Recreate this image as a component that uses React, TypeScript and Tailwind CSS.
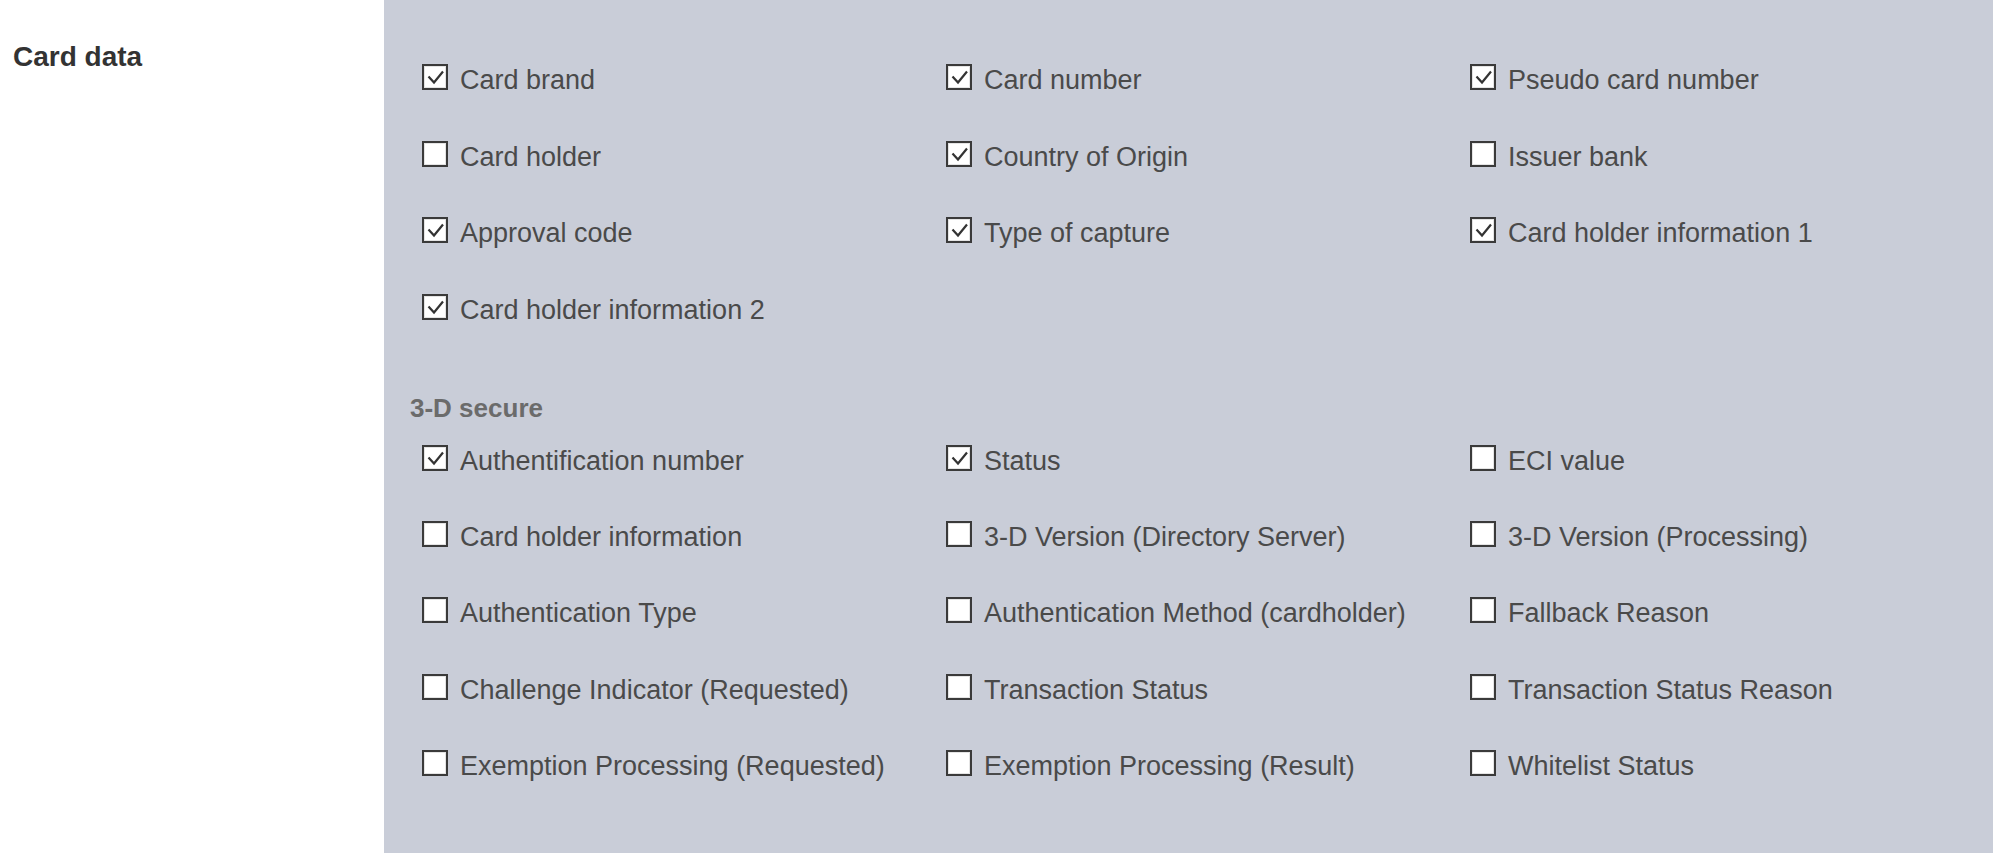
import React from "react";

type Item = { label: string; checked: boolean };

const cardData: Item[] = [
  { label: "Card brand", checked: true },
  { label: "Card number", checked: true },
  { label: "Pseudo card number", checked: true },
  { label: "Card holder", checked: false },
  { label: "Country of Origin", checked: true },
  { label: "Issuer bank", checked: false },
  { label: "Approval code", checked: true },
  { label: "Type of capture", checked: true },
  { label: "Card holder information 1", checked: true },
  { label: "Card holder information 2", checked: true },
];

const secure: Item[] = [
  { label: "Authentification number", checked: true },
  { label: "Status", checked: true },
  { label: "ECI value", checked: false },
  { label: "Card holder information", checked: false },
  { label: "3-D Version (Directory Server)", checked: false },
  { label: "3-D Version (Processing)", checked: false },
  { label: "Authentication Type", checked: false },
  { label: "Authentication Method (cardholder)", checked: false },
  { label: "Fallback Reason", checked: false },
  { label: "Challenge Indicator (Requested)", checked: false },
  { label: "Transaction Status", checked: false },
  { label: "Transaction Status Reason", checked: false },
  { label: "Exemption Processing (Requested)", checked: false },
  { label: "Exemption Processing (Result)", checked: false },
  { label: "Whitelist Status", checked: false },
];

function Box({ checked }: { checked: boolean }) {
  return (
    <svg width="26" height="26" viewBox="0 0 26 26" className="shrink-0 ml-[12px]">
      <rect x="1" y="1" width="24" height="24" fill="#ffffff" stroke="#3a3a3a" strokeWidth="2" />
      <rect x="2.5" y="2.5" width="21" height="21" fill="none" stroke="#e4e4e4" strokeWidth="1" />
      {checked && (
        <polyline
          points="6.5,12.5 12,18.5 21,7.5"
          fill="none"
          stroke="#333333"
          strokeWidth="2.2"
          strokeLinejoin="miter"
        />
      )}
    </svg>
  );
}

function Row({ item, h }: { item: Item; h: string }) {
  return (
    <div className={`flex items-start ${h}`}>
      <Box checked={item.checked} />
      <span className="ml-[12px] mt-[1px] text-[27px] leading-[30px] text-[#4a4a4a] whitespace-nowrap">
        {item.label}
      </span>
    </div>
  );
}

export default function App() {
  return (
    <div
      className="flex w-[2000px] min-h-[853px] bg-white"
      style={{ fontFamily: '"Liberation Sans", Arial, sans-serif' }}
    >
      <div className="w-[384px] shrink-0 pl-[13px] pt-[42px]">
        <div className="text-[28px] leading-[30px] font-bold text-[#333333]">Card data</div>
      </div>
      <div className="flex-1 mr-[7px] bg-[#c9cdd8] min-h-[853px] pl-[26px] pt-[64px]">
        <div className="grid grid-cols-[524px_524px_524px]">
          {cardData.map((it) => (
            <Row key={it.label} item={it} h="h-[76.67px]" />
          ))}
        </div>
        <div className="mt-[22px] text-[26px] leading-[30px] font-bold text-[#6b6b6b]">3-D secure</div>
        <div className="mt-[22px] grid grid-cols-[524px_524px_524px]">
          {secure.map((it) => (
            <Row key={it.label} item={it} h="h-[76.33px]" />
          ))}
        </div>
      </div>
    </div>
  );
}
